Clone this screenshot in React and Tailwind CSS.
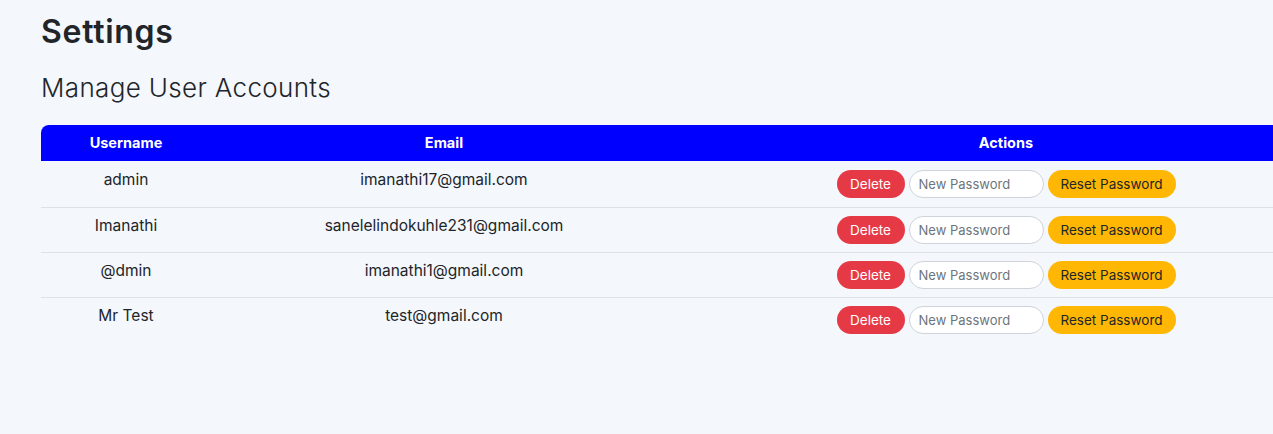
import React from 'react';

const users = [
    { username: 'admin', email: 'imanathi17@gmail.com' },
    { username: 'Imanathi', email: 'sanelelindokuhle231@gmail.com' },
    { username: '@dmin', email: 'imanathi1@gmail.com' },
    { username: 'Mr Test', email: 'test@gmail.com' },
];

const App = () => {
    return (
        <div
            className="min-h-screen w-full overflow-hidden bg-[#f4f7fc] text-[#212529] px-[41px] pt-[12px]"
            style={{ fontFamily: 'Inter, "Noto Sans", sans-serif' }}
        >
            <h1 className="text-[32px] font-semibold leading-[40px] tracking-[0.7px]">Settings</h1>
            <h2 className="mt-[20px] text-[26px] font-light leading-[32px] tracking-[0.35px]">Manage User Accounts</h2>

            <table className="mt-[21px] table-fixed w-[1294px] border-collapse text-[15.5px]">
                <colgroup>
                    <col className="w-[170px]" />
                    <col className="w-[466px]" />
                    <col className="w-[658px]" />
                </colgroup>
                <thead>
                    <tr className="bg-[#0000ff] text-white text-[14.5px] font-extrabold h-[36px]">
                        <th className="rounded-tl-[8px]">Username</th>
                        <th>Email</th>
                        <th>Actions</th>
                    </tr>
                </thead>
                <tbody>
                    {users.map((u, i) => {
                        const first = i === 0;
                        const textCell = first
                            ? 'text-center align-top pt-[8px] pb-[9px] leading-[22px]'
                            : 'text-center align-top pt-[7px] pb-[8px] leading-[22px]';
                        return (
                            <tr key={u.email} className={i < users.length - 1 ? 'border-b border-[#dee2e6]' : ''}>
                                <td className={textCell}>{u.username}</td>
                                <td className={textCell}>{u.email}</td>
                                <td className={first ? 'pt-[9px] pb-[9px]' : 'py-[8px]'}>
                                    <div className="flex items-center justify-center gap-[4px]">
                                        <button className="h-[28px] w-[68px] rounded-full bg-[#e63946] text-white text-[13.5px]">
                                            Delete
                                        </button>
                                        <input
                                            type="password"
                                            placeholder="New Password"
                                            className="h-[28px] w-[135px] rounded-full border border-[#ced4da] bg-white px-[9px] text-[13px] placeholder:text-[#6c757d] outline-none"
                                        />
                                        <button className="h-[28px] w-[128px] rounded-full bg-[#ffb703] text-[#212529] text-[13.5px]">
                                            Reset Password
                                        </button>
                                    </div>
                                </td>
                            </tr>
                        );
                    })}
                </tbody>
            </table>
        </div>
    );
};

export default App;
